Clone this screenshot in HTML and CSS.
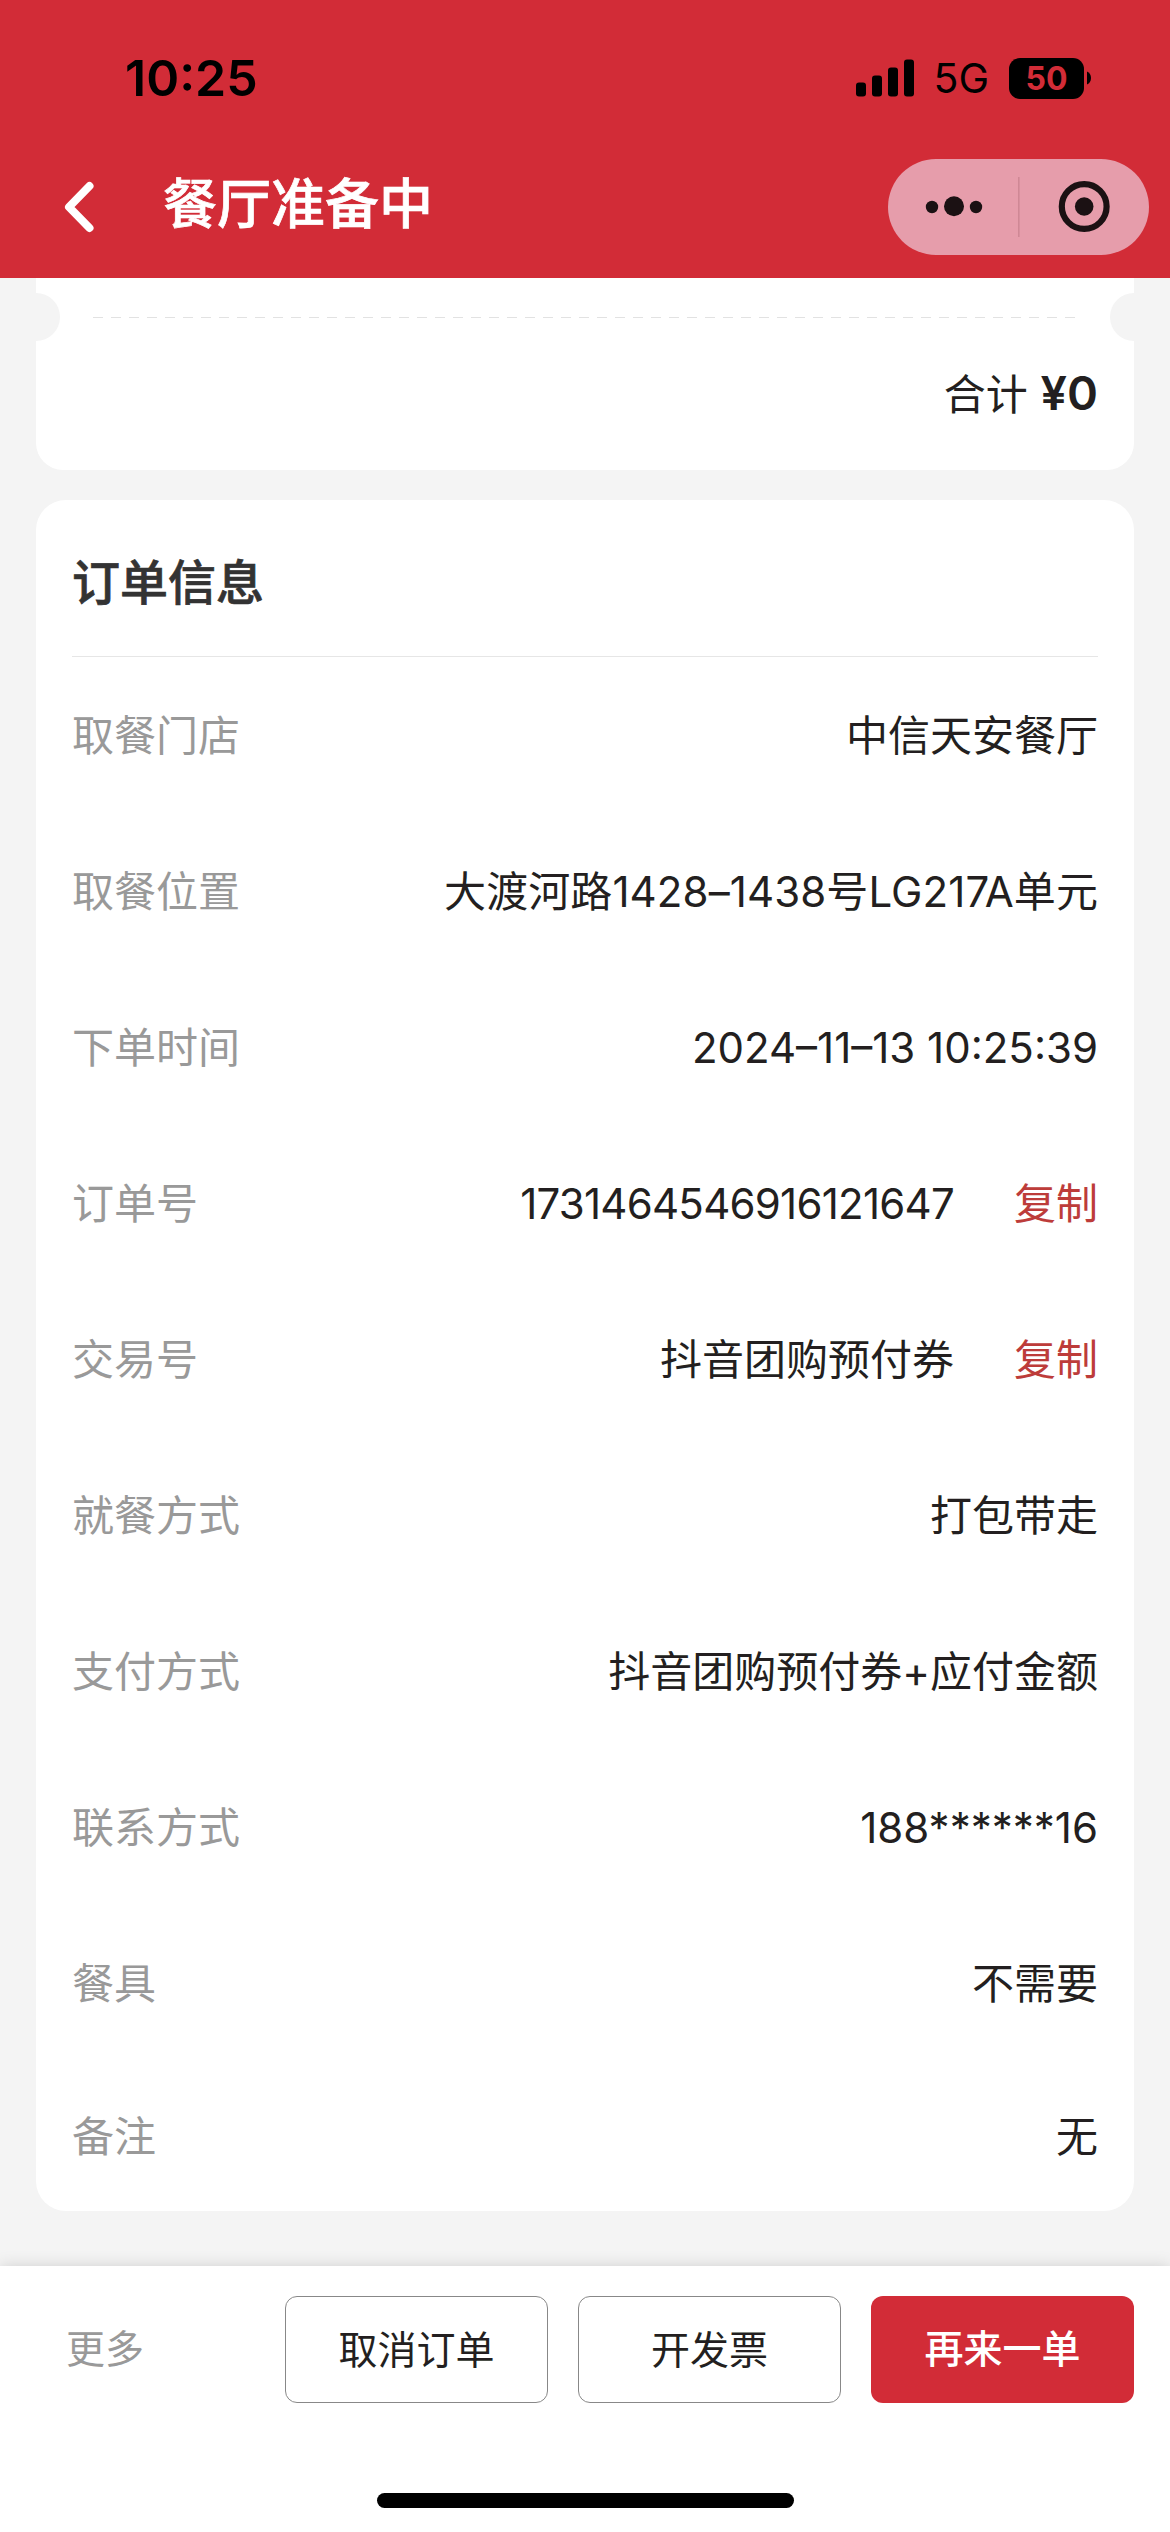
FILE: index.html
```
<!DOCTYPE html>
<html lang="zh-CN">

<head>
    <meta charset="utf-8" />
    <title>餐厅准备中</title>
    <link rel="stylesheet" href="styles.css">
</head>

<body>

    <div class="header">
        <div class="status">
            <span class="time">10:25</span>
            <svg class="signal" width="58" height="38" viewBox="0 0 58 38">
                <rect x="0" y="23.5" width="10" height="14" rx="3" />
                <rect x="16" y="16.5" width="10" height="21" rx="3" />
                <rect x="32" y="8.5" width="10" height="29" rx="3" />
                <rect x="48" y="0.5" width="10" height="37" rx="3" />
            </svg>
            <span class="network">5G</span>
            <span class="battery">50</span>
            <svg class="nub" width="4" height="14" viewBox="0 0 4 14">
                <path d="M0 0.5C2.5 1.5 4 4 4 7S2.5 12.5 0 13.5Z" />
            </svg>
        </div>
        <div class="nav">
            <svg class="back" width="32" height="52" viewBox="0 0 32 52">
                <path d="M27.5 5L7 26L27.5 47" fill="none" stroke="#fff" stroke-width="8" stroke-linecap="round" stroke-linejoin="round" />
            </svg>
            <h1>餐厅准备中</h1>
            <div class="capsule">
                <svg width="261" height="96" viewBox="0 0 261 96">
                    <circle cx="44" cy="48" r="6.2" />
                    <circle cx="66" cy="47.2" r="10" />
                    <circle cx="88" cy="48" r="6.2" />
                    <rect x="130" y="18" width="1.6" height="60" fill="#cf8895" />
                    <circle cx="196.2" cy="47.5" r="22.4" fill="none" stroke="#1b1113" stroke-width="6.2" />
                    <circle cx="196.2" cy="47.5" r="9.3" />
                </svg>
            </div>
        </div>
    </div>

    <div class="content">
        <div class="card total">
            <div class="ticket">
                <span class="notch left"></span>
                <span class="dashes"></span>
                <span class="notch right"></span>
            </div>
            <p class="sum">合计 <b>¥0</b></p>
        </div>

        <div class="card info">
            <h2>订单信息</h2>
            <div class="row"><span class="label">取餐门店</span><span class="value">中信天安餐厅</span></div>
            <div class="row"><span class="label">取餐位置</span><span class="value address">大渡河路1428–1438号LG217A单元</span></div>
            <div class="row"><span class="label">下单时间</span><span class="value">2024–11–13 10:25:39</span></div>
            <div class="row"><span class="label">订单号</span><span class="value number">1731464546916121647</span><a class="copy">复制</a></div>
            <div class="row"><span class="label">交易号</span><span class="value">抖音团购预付券</span><a class="copy">复制</a></div>
            <div class="row"><span class="label">就餐方式</span><span class="value">打包带走</span></div>
            <div class="row"><span class="label">支付方式</span><span class="value">抖音团购预付券+应付金额</span></div>
            <div class="row"><span class="label">联系方式</span><span class="value">188******16</span></div>
            <div class="row"><span class="label">餐具</span><span class="value">不需要</span></div>
            <div class="row last"><span class="label">备注</span><span class="value">无</span></div>
        </div>
    </div>

    <div class="footer">
        <div class="actions">
            <span class="more">更多</span>
            <button>取消订单</button>
            <button>开发票</button>
            <button class="primary">再来一单</button>
        </div>
        <div class="home"></div>
    </div>

</body>

</html>
```
FILE: styles.css
```
* {
    box-sizing: border-box;
}

body {
    display: flex;
    flex-direction: column;
    width: 1170px;
    height: 2532px;
    margin: 0;
    background-color: #f4f4f4;
    color: #231f20;
    font-family: Inter, "Noto Sans CJK SC", sans-serif;
    font-size: 42px;
    line-height: 60px;
    overflow: hidden;
}

h1, h2, p {
    margin: 0;
}

.header {
    height: 278px;
    background-color: #d22c37;
}

.status {
    display: flex;
    align-items: center;
    height: 159px;
    padding: 0 79px 3px 125px;
    color: #000;
}

.time {
    margin-right: auto;
    font-size: 50px;
    font-weight: 600;
}

.network {
    margin: 0 20px 0 19px;
    font-size: 41px;
}

.battery {
    width: 75px;
    height: 41px;
    margin-right: 3px;
    border-radius: 11px;
    background-color: #000;
    color: #d22c37;
    font-size: 32px;
    font-weight: 700;
    line-height: 42px;
    text-align: center;
}

.nav {
    display: flex;
    align-items: center;
    height: 96px;
    padding: 0 21px 0 62px;
}

h1 {
    margin-left: 69px;
    padding-bottom: 5px;
    color: #fff;
    font-size: 54px;
    font-weight: 500;
    -webkit-text-stroke: 0.7px #fff;
}

.capsule {
    width: 261px;
    height: 96px;
    margin-left: auto;
    border-radius: 48px;
    background-color: #e69dab;
    fill: #1b1113;
}

.content {
    display: flex;
    flex-direction: column;
    gap: 30px;
    height: 1988px;
    padding: 0 36px;
}

.card {
    border-radius: 30px;
    background-color: #fff;
}

.total {
    height: 192px;
    padding-top: 15px;
    border-radius: 0 0 27px 27px;
}

.ticket {
    display: flex;
    align-items: center;
    justify-content: space-between;
    height: 48px;
}

.notch {
    width: 24px;
    height: 48px;
    background-color: #f4f4f4;
}

.left {
    border-radius: 0 24px 24px 0;
}

.right {
    border-radius: 24px 0 0 24px;
}

.dashes {
    width: 985px;
    height: 1px;
    background: repeating-linear-gradient(to right, #e2e2e2 0 10px, transparent 10px 18px);
}

.sum {
    padding: 22px 36px 0;
    text-align: right;
}

.sum b {
    margin-left: 1px;
    font-size: 47px;
    font-weight: 600;
}

.info {
    height: 1711px;
    padding: 0 36px;
}

h2 {
    height: 157px;
    border-bottom: 1px solid #e6e6e6;
    color: #333;
    font-size: 48px;
    font-weight: 500;
    line-height: 165px;
    -webkit-text-stroke: 0.7px #333;
}

.row {
    display: flex;
    align-items: center;
    justify-content: space-between;
    height: 156px;
    padding-top: 1px;
}

.last {
    height: 150px;
}

.label {
    color: #999;
}

.value {
    margin-left: auto;
}

.address {
    letter-spacing: 0.1px;
}

.number {
    letter-spacing: -0.75px;
}

.copy {
    margin-left: 60px;
    color: #bd3c3a;
}

.footer {
    height: 266px;
    background-color: #fff;
    box-shadow: 0 0 15px rgba(0, 0, 0, 0.15);
}

.actions {
    display: flex;
    gap: 30px;
    height: 227px;
    padding: 30px 36px 90px 66px;
    font-size: 39px;
    line-height: 105px;
}

.more {
    margin-right: auto;
    color: #999;
}

button {
    width: 263px;
    height: 107px;
    padding: 0 0 2px;
    border: 1px solid #888;
    border-radius: 12px;
    background-color: #fff;
    color: #231f20;
    font: inherit;
}

.primary {
    border: 0;
    background-color: #d22c37;
    color: #fff;
    font-weight: 500;
}

.home {
    width: 417px;
    height: 15px;
    margin: 0 auto;
    border-radius: 8px;
    background-color: #000;
}
```
